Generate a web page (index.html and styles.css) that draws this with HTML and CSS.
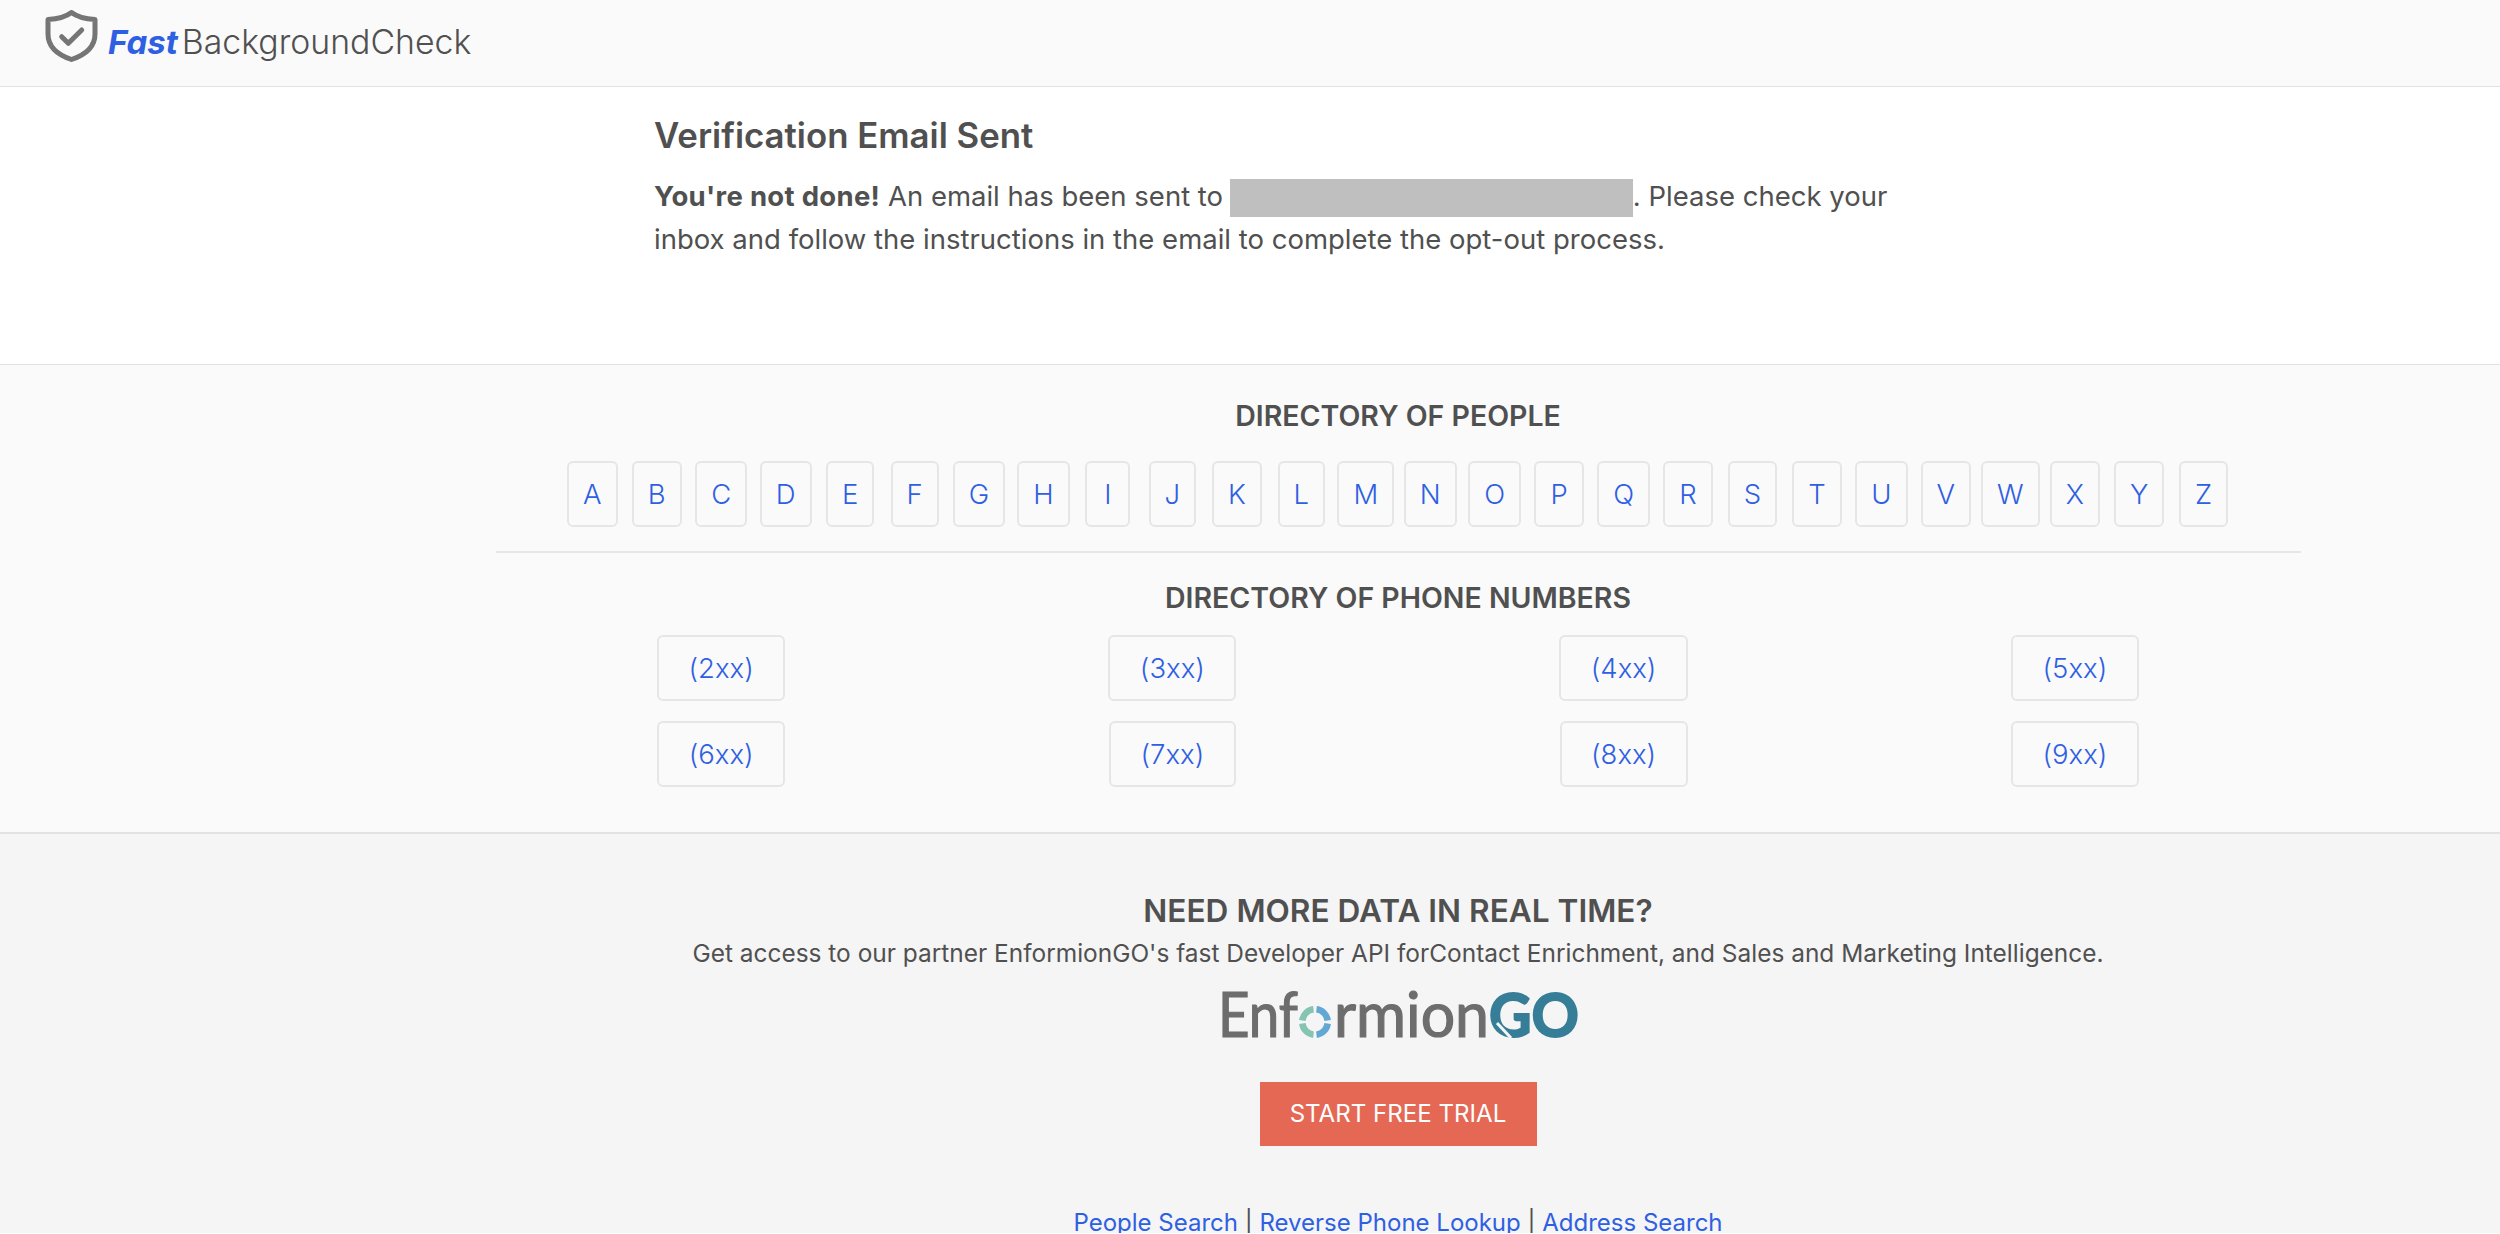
FILE: index.html
```html
<!DOCTYPE html>
<html lang="en">
<head>
  <meta charset="UTF-8">
  <title>Verification Email Sent - FastBackgroundCheck</title>
  <link rel="stylesheet" href="styles.css">
</head>
<body>
  <header class="site-header">
    <a class="brand" href="#">
      <svg class="brand-icon" viewBox="0 0 53 52" width="53" height="52" fill="none" stroke="#757575" stroke-linecap="round" stroke-linejoin="round">
        <path stroke-width="5" d="M26.5 2.5C33 7.5 41 9 50 9.5V24C50 37 40 45 26.5 49.5C13 45 3 37 3 24V9.5C12 9 20 7.5 26.5 2.5Z"/>
        <path stroke-width="5" d="M16.7 26.7L23.3 33.3L36.7 20"/>
      </svg>
      <span class="brand-fast">Fast</span><span class="brand-rest">BackgroundCheck</span>
    </a>
  </header>

  <main class="notice">
    <h1>Verification Email Sent</h1>
    <p><strong>You're not done!</strong> An email has been sent to <span class="redacted"></span>. Please check your inbox and follow the instructions in the email to complete the opt-out process.</p>
  </main>

  <section class="directory">
    <h2>DIRECTORY OF PEOPLE</h2>
    <div class="letters">
      <a href="#">A</a><a href="#">B</a><a href="#">C</a><a href="#">D</a><a href="#">E</a><a href="#">F</a>
      <a href="#">G</a><a href="#">H</a><a href="#">I</a><a href="#">J</a><a href="#">K</a><a href="#">L</a>
      <a href="#">M</a><a href="#">N</a><a href="#">O</a><a href="#">P</a><a href="#">Q</a><a href="#">R</a>
      <a href="#">S</a><a href="#">T</a><a href="#">U</a><a href="#">V</a><a href="#">W</a><a href="#">X</a>
      <a href="#">Y</a><a href="#">Z</a>
    </div>
    <hr>
    <h2>DIRECTORY OF PHONE NUMBERS</h2>
    <div class="phones">
      <a href="#">(2xx)</a><a href="#">(3xx)</a><a href="#">(4xx)</a><a href="#">(5xx)</a>
      <a href="#">(6xx)</a><a href="#">(7xx)</a><a href="#">(8xx)</a><a href="#">(9xx)</a>
    </div>
  </section>

  <footer class="site-footer">
    <h3>NEED MORE DATA IN REAL TIME?</h3>
    <p class="partner">Get access to our partner EnformionGO's fast Developer API forContact Enrichment, and Sales and Marketing Intelligence.</p>
    <svg class="partner-logo" viewBox="0 0 360 46" width="360" height="46">
      <text class="logo-grey" x="0" y="45" textLength="80" lengthAdjust="spacingAndGlyphs">Enf</text>
      <path class="ring-green" d="M84.34 28.5A12.75 12.75 0 0 1 95.5 17.34"/>
      <path class="ring-blue" d="M98.5 17.34A12.75 12.75 0 0 1 109.66 28.5"/>
      <path class="ring-blue" d="M109.66 31.5A12.75 12.75 0 0 1 98.5 42.66"/>
      <path class="ring-green" d="M95.5 42.66A12.75 12.75 0 0 1 84.34 31.5"/>
      <text class="logo-grey" x="116" y="45" textLength="155" lengthAdjust="spacingAndGlyphs">rmion</text>
      <text class="logo-teal" x="271" y="45" textLength="90" lengthAdjust="spacingAndGlyphs">GO</text>
      <path class="logo-notch" d="M279 31L293 46"/>
    </svg>
    <a class="trial-btn" href="#">START FREE TRIAL</a>
    <nav class="footer-links">
      <a href="#">People Search</a> | <a href="#">Reverse Phone Lookup</a> | <a href="#">Address Search</a>
    </nav>
  </footer>
</body>
</html>
```

FILE: styles.css
```css
html {
  overflow: hidden;
}
body {
  margin: 0;
  font-family: Inter, 'Noto Sans', sans-serif;
  color: #505050;
  background: #fff;
}
a {
  color: #2f5fe3;
  text-decoration: none;
}

.site-header {
  height: 86px;
  background: #fafafa;
  border-bottom: 1px solid #e2e2e2;
  padding-left: 45px;
  display: flex;
  align-items: center;
}
.brand {
  display: flex;
  align-items: center;
}
.brand-icon {
  margin-right: 10px;
  margin-top: -14px;
}
.brand-fast {
  color: #2f5fe3;
  font-size: 33px;
  font-weight: 700;
  font-style: italic;
  margin-right: 4px;
  margin-top: -3px;
}
.brand-rest {
  color: #505050;
  font-size: 33.8px;
  font-weight: 300;
  margin-top: -3px;
}

.notice {
  height: 277px;
  box-sizing: border-box;
  padding: 0 0 0 654px;
  background: #fff;
}
.notice h1 {
  margin: 0;
  padding-top: 29px;
  font-size: 34.8px;
  line-height: 39px;
  font-weight: 600;
}
.notice p {
  margin: 20px 0 0;
  width: 1250px;
  font-size: 27.5px;
  line-height: 43px;
}
.notice strong {
  font-weight: 700;
  letter-spacing: 0.3px;
}
.redacted {
  display: inline-block;
  width: 403px;
  height: 38px;
  background: #bfbfbf;
  vertical-align: -11px;
  margin-left: -1px;
}

.directory {
  background: #fafafa;
  border-top: 1px solid #e2e2e2;
  height: 468px;
  box-sizing: border-box;
  padding: 34px 0 0 296px;
}
.directory h2 {
  margin: 0;
  text-align: center;
  font-size: 28.5px;
  line-height: 33px;
  font-weight: 600;
}
.letters {
  display: grid;
  grid-template-columns: repeat(26, 64.46px);
  justify-content: center;
  justify-items: center;
  margin-top: 29px;
}
.letters a,
.phones a {
  box-sizing: border-box;
  height: 66px;
  border: 2px solid #e6e6e6;
  border-radius: 6px;
  display: flex;
  align-items: center;
  justify-content: center;
  font-size: 27.5px;
  font-weight: 300;
}
.letters a {
  min-width: 45px;
  padding: 0 14px;
}
.directory hr {
  width: 1805px;
  margin: 24px auto 0;
  border: 0;
  border-top: 2px solid #e6e6e6;
}
.directory hr + h2 {
  margin-top: 28px;
}
.phones {
  width: 1805px;
  margin: 21px auto 0;
  display: grid;
  grid-template-columns: repeat(4, 1fr);
  justify-items: center;
  row-gap: 20px;
}
.phones a {
  padding: 0 29.5px;
}

.site-footer {
  background: #f5f5f5;
  border-top: 2px solid #e2e2e2;
  height: 401px;
  box-sizing: border-box;
  padding: 58px 0 0 296px;
  text-align: center;
}
.site-footer h3 {
  margin: 0;
  font-size: 31.6px;
  line-height: 37px;
  font-weight: 600;
}
.partner {
  margin: 8px 0 0;
  font-size: 24.45px;
  line-height: 32px;
}
.partner-logo {
  display: block;
  margin: 23px auto 0;
  overflow: visible;
}
.logo-grey {
  font-family: Lato, sans-serif;
  font-size: 61px;
  fill: #6d6d6d;
  stroke: #6d6d6d;
  stroke-width: 1.2px;
}
.logo-teal {
  font-family: Lato, sans-serif;
  font-size: 62px;
  font-weight: 700;
  fill: #367e98;
  stroke: #367e98;
  stroke-width: 2px;
}
.logo-notch {
  fill: none;
  stroke: #f5f5f5;
  stroke-width: 3px;
}
.ring-green,
.ring-blue {
  fill: none;
  stroke-width: 6.5px;
}
.ring-green {
  stroke: #84c4b1;
}
.ring-blue {
  stroke: #63a8d4;
}
.trial-btn {
  display: block;
  width: 277px;
  height: 64px;
  margin: 44px auto 0;
  background: #e56855;
  color: #fff;
  font-size: 24.1px;
  line-height: 64px;
}
.footer-links {
  margin-top: 62px;
  font-size: 24px;
  line-height: 30px;
}
```
